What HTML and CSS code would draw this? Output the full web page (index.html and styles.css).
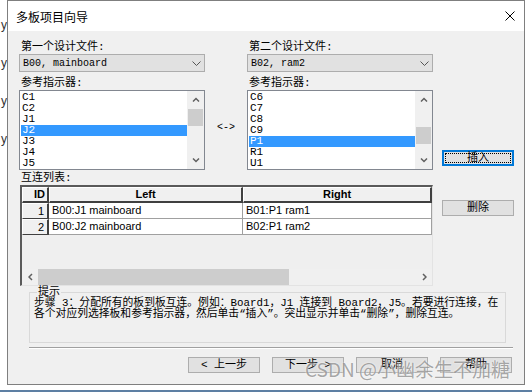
FILE: index.html
```html
<!DOCTYPE html>
<html lang="zh-CN">
<head>
    <meta charset="UTF-8">
    <meta name="viewport" content="width=device-width, initial-scale=1.0">
    <title>多板项目向导</title>
    <link rel="stylesheet" href="styles.css">
</head>
<body>
    <div class="desk">
        <div class="behind"><span>y</span><span>y</span><span>y</span><span>y</span></div>

        <div class="dialog">
            <div class="titlebar">
                <span>多板项目向导</span>
                <svg width="10" height="10" viewBox="0 0 10 10"><path d="M0.5 0.5L9.5 9.5M9.5 0.5L0.5 9.5" stroke="#000" stroke-width="1"/></svg>
            </div>

            <div class="client">
                <div class="main">
                    <div class="work">
                        <div class="pickers">
                            <div class="picker">
                                <div class="label">第一个设计文件:</div>
                                <div class="combo">
                                    <span>B00, mainboard</span>
                                    <svg width="9" height="5" viewBox="0 0 9 5"><path d="M0.5 0.5L4.5 4.5L8.5 0.5" fill="none" stroke="#555" stroke-width="1"/></svg>
                                </div>
                                <div class="label label-gap">参考指示器:</div>
                                <div class="listbox">
                                    <ul class="items">
                                        <li>C1</li>
                                        <li>C2</li>
                                        <li>J1</li>
                                        <li class="selected">J2</li>
                                        <li>J3</li>
                                        <li>J4</li>
                                        <li>J5</li>
                                    </ul>
                                    <div class="vscroll">
                                        <span class="vs-arrow"><svg width="8" height="5" viewBox="0 0 8 5"><path d="M1 4.5L4 1.5L7 4.5" fill="none" stroke="#606060" stroke-width="1.5"/></svg></span>
                                        <div class="vs-track"><div class="vs-thumb"></div></div>
                                        <span class="vs-arrow"><svg width="8" height="5" viewBox="0 0 8 5"><path d="M1 0.5L4 3.5L7 0.5" fill="none" stroke="#606060" stroke-width="1.5"/></svg></span>
                                    </div>
                                </div>
                            </div>

                            <div class="link-mark">&lt;-&gt;</div>

                            <div class="picker">
                                <div class="label">第二个设计文件:</div>
                                <div class="combo">
                                    <span>B02, ram2</span>
                                    <svg width="9" height="5" viewBox="0 0 9 5"><path d="M0.5 0.5L4.5 4.5L8.5 0.5" fill="none" stroke="#555" stroke-width="1"/></svg>
                                </div>
                                <div class="label label-gap">参考指示器:</div>
                                <div class="listbox">
                                    <ul class="items">
                                        <li>C6</li>
                                        <li>C7</li>
                                        <li>C8</li>
                                        <li>C9</li>
                                        <li class="selected">P1</li>
                                        <li>R1</li>
                                        <li>U1</li>
                                    </ul>
                                    <div class="vscroll">
                                        <span class="vs-arrow"><svg width="8" height="5" viewBox="0 0 8 5"><path d="M1 4.5L4 1.5L7 4.5" fill="none" stroke="#606060" stroke-width="1.5"/></svg></span>
                                        <div class="vs-track"><div class="vs-thumb thumb-low"></div></div>
                                        <span class="vs-arrow"><svg width="8" height="5" viewBox="0 0 8 5"><path d="M1 0.5L4 3.5L7 0.5" fill="none" stroke="#606060" stroke-width="1.5"/></svg></span>
                                    </div>
                                </div>
                            </div>
                        </div>

                        <div class="label list-label">互连列表:</div>
                        <div class="grid">
                            <div class="cells">
                                <div class="hcell hid">ID</div>
                                <div class="hcell">Left</div>
                                <div class="hcell">Right</div>
                                <div class="fcell">1</div>
                                <div class="dcell">B00:J1 mainboard</div>
                                <div class="dcell">B01:P1 ram1</div>
                                <div class="fcell">2</div>
                                <div class="dcell">B00:J2 mainboard</div>
                                <div class="dcell">B02:P1 ram2</div>
                            </div>
                            <div class="grid-empty"></div>
                            <div class="hscroll">
                                <span class="hs-arrow"><svg width="5" height="8" viewBox="0 0 5 8"><path d="M4 1L1 4L4 7" fill="none" stroke="#606060" stroke-width="1.5"/></svg></span>
                                <div class="hs-track"><div class="hs-thumb"></div></div>
                                <span class="hs-arrow"><svg width="5" height="8" viewBox="0 0 5 8"><path d="M1 1L4 4L1 7" fill="none" stroke="#606060" stroke-width="1.5"/></svg></span>
                            </div>
                        </div>
                    </div>

                    <div class="side">
                        <button class="btn btn-default">插入</button>
                        <button class="btn btn-remove">删除</button>
                    </div>
                </div>

                <div class="hint">
                    <div class="hint-title">提示</div>
                    <div class="hint-text">步骤 3：分配所有的板到板互连。例如：Board1，J1 连接到 Board2，J5。若要进行连接，在<br>各个对应列选择板和参考指示器，然后单击“插入”。突出显示并单击“删除”，删除互连。</div>
                </div>

                <div class="sep"></div>

                <div class="footer">
                    <button class="btn">&lt; 上一步</button>
                    <button class="btn">下一步 &gt;</button>
                    <button class="btn">取消</button>
                    <button class="btn">帮助</button>
                </div>
            </div>
        </div>
    </div>
    <div class="taskbar"></div>

    <div class="watermark">CSDN @小幽余生不加糖</div>
</body>
</html>
```

FILE: styles.css
```css
* {
    box-sizing: border-box;
}

body {
    margin: 0;
    width: 532px;
    height: 392px;
    overflow: hidden;
    position: relative;
    background-color: #fff;
    color: #000;
    font-family: 'Liberation Mono', 'Noto Sans CJK SC', monospace;
    font-size: 11px;
}

.desk {
    display: flex;
    height: 390px;
}

.behind {
    width: 7px;
    overflow: hidden;
    padding-top: 6px;
    font-family: 'Liberation Sans', sans-serif;
    font-size: 12px;
    color: #333;
    text-align: right;
}

.behind span {
    display: block;
    height: 38px;
    line-height: 38px;
}

.dialog {
    width: 518px;
    height: 385px;
    border: 1px solid #7f7f7f;
    background-color: #f0f0f0;
    display: flex;
    flex-direction: column;
}

.titlebar {
    flex: none;
    height: 30px;
    background-color: #fff;
    display: flex;
    align-items: center;
    justify-content: space-between;
    padding: 0 9px 0 8px;
    font-family: 'Noto Sans CJK SC', sans-serif;
    font-size: 12px;
}

.client {
    flex: 1;
    padding: 10px 10px 0 11px;
}

.main {
    display: flex;
    gap: 9px;
}

.work {
    width: 414px;
}

.pickers {
    display: flex;
}

.picker {
    width: 186px;
}

.link-mark {
    width: 42px;
    display: flex;
    align-items: flex-end;
    justify-content: center;
    padding-bottom: 36px;
    font-size: 10px;
    line-height: 12px;
}

.label {
    height: 13px;
    line-height: 13px;
    padding-left: 2px;
    white-space: nowrap;
}

.label-gap {
    margin-top: 5px;
}

.list-label {
    margin-top: 2px;
}

.combo {
    height: 18px;
    border: 1px solid #adadad;
    background-color: #e1e1e1;
    display: flex;
    align-items: center;
    justify-content: space-between;
    padding: 0 3px 0 3px;
    font-size: 10px;
}

/* list boxes */
.listbox {
    height: 80px;
    border: 1px solid #828790;
    background-color: #fff;
    display: flex;
}

.items {
    flex: 1;
    list-style: none;
    margin: 0;
    padding: 1px 0 0 1px;
    font-size: 11px;
    line-height: 11px;
}

.items li {
    height: 11px;
    padding-left: 1px;
}

.items li.selected {
    background-color: #3399ff;
    color: #fff;
}

.vscroll {
    width: 17px;
    display: flex;
    flex-direction: column;
    background-color: #f0f0f0;
}

.vs-arrow {
    height: 17px;
    display: flex;
    align-items: center;
    justify-content: center;
}

.vs-track {
    flex: 1;
}

.vs-thumb {
    height: 17px;
    margin: 1px 1px 0;
    background-color: #cdcdcd;
}

.vs-thumb.thumb-low {
    margin-top: 19px;
}

/* interconnect grid */
.grid {
    margin-left: 1px;
    width: 413px;
    height: 101px;
    border-style: solid;
    border-width: 2px 1px 1px 2px;
    border-color: #5a5a5a #e3e3e3 #e3e3e3 #5a5a5a;
    background-color: #efefef;
    display: flex;
    flex-direction: column;
    font-family: 'Liberation Sans', Arial, sans-serif;
}

.cells {
    display: grid;
    grid-template-columns: 27px 194px 1fr;
    grid-auto-rows: 16px;
}

.hcell {
    background-color: #f0f0f0;
    border-top: 1px solid #fff;
    border-left: 1px solid #fff;
    border-right: 2px solid #404040;
    border-bottom: 2px solid #404040;
    font-weight: bold;
    text-align: center;
    line-height: 13px;
}

.hcell.hid {
    text-align: right;
    padding-right: 2px;
}

.fcell {
    background-color: #f0f0f0;
    border-top: 1px solid #fff;
    border-left: 1px solid #fff;
    border-right: 2px solid #404040;
    border-bottom: 1px solid #404040;
    text-align: right;
    padding-right: 3px;
    line-height: 14px;
}

.dcell {
    background-color: #fff;
    border-right: 1px solid #a0a0a0;
    border-bottom: 1px solid #a0a0a0;
    padding-left: 3px;
    line-height: 15px;
    white-space: nowrap;
    overflow: hidden;
}

.grid-empty {
    flex: 1;
}

.hscroll {
    height: 16px;
    display: flex;
    background-color: #f0f0f0;
}

.hs-arrow {
    width: 16px;
    display: flex;
    align-items: center;
    justify-content: center;
}

.hs-track {
    flex: 1;
}

.hs-thumb {
    width: 251px;
    height: 100%;
    background-color: #cdcdcd;
}

/* buttons */
.side {
    display: flex;
    flex-direction: column;
    padding-top: 109px;
}

.btn {
    width: 72px;
    height: 16px;
    margin: 0;
    padding: 0;
    border: 1px solid #adadad;
    background-color: #e1e1e1;
    color: #000;
    font-family: 'Liberation Mono', 'Noto Sans CJK SC', monospace;
    font-size: 11px;
    line-height: 14px;
    text-align: center;
}

.btn-default {
    position: relative;
    border-color: #0078d7;
    box-shadow: inset 0 0 0 1px #0078d7;
}

.btn-default::after {
    content: '';
    position: absolute;
    inset: 2px;
    border: 1px dotted #000;
}

.btn-remove {
    margin-top: 34px;
}

/* hint box */
.hint {
    margin: 6px 0 0 10px;
    width: 477px;
    height: 51px;
    border: 1px solid #d9d9d9;
    padding: 0 4px;
}

.hint-title {
    width: max-content;
    margin: -6px 0 0 3px;
    padding: 0 1px;
    background-color: #f0f0f0;
    line-height: 11px;
}

.hint-text {
    font-size: 10.8px;
    line-height: 11px;
    white-space: nowrap;
}

.sep {
    margin: 4px 0 0 10px;
    width: 484px;
    height: 2px;
    border-top: 1px solid #a0a0a0;
    border-bottom: 1px solid #fff;
}

.footer {
    margin-top: 8px;
    display: flex;
    justify-content: flex-end;
    gap: 12px;
    padding-right: 2px;
}

.taskbar {
    height: 2px;
    background-color: #5d7fa3;
}

.watermark {
    position: absolute;
    left: 305px;
    top: 357px;
    font-family: 'Noto Sans CJK SC', sans-serif;
    font-size: 19px;
    line-height: 24px;
    color: rgba(110, 110, 110, 0.6);
    text-shadow: 0 0 2px #fff;
    white-space: nowrap;
}
```
